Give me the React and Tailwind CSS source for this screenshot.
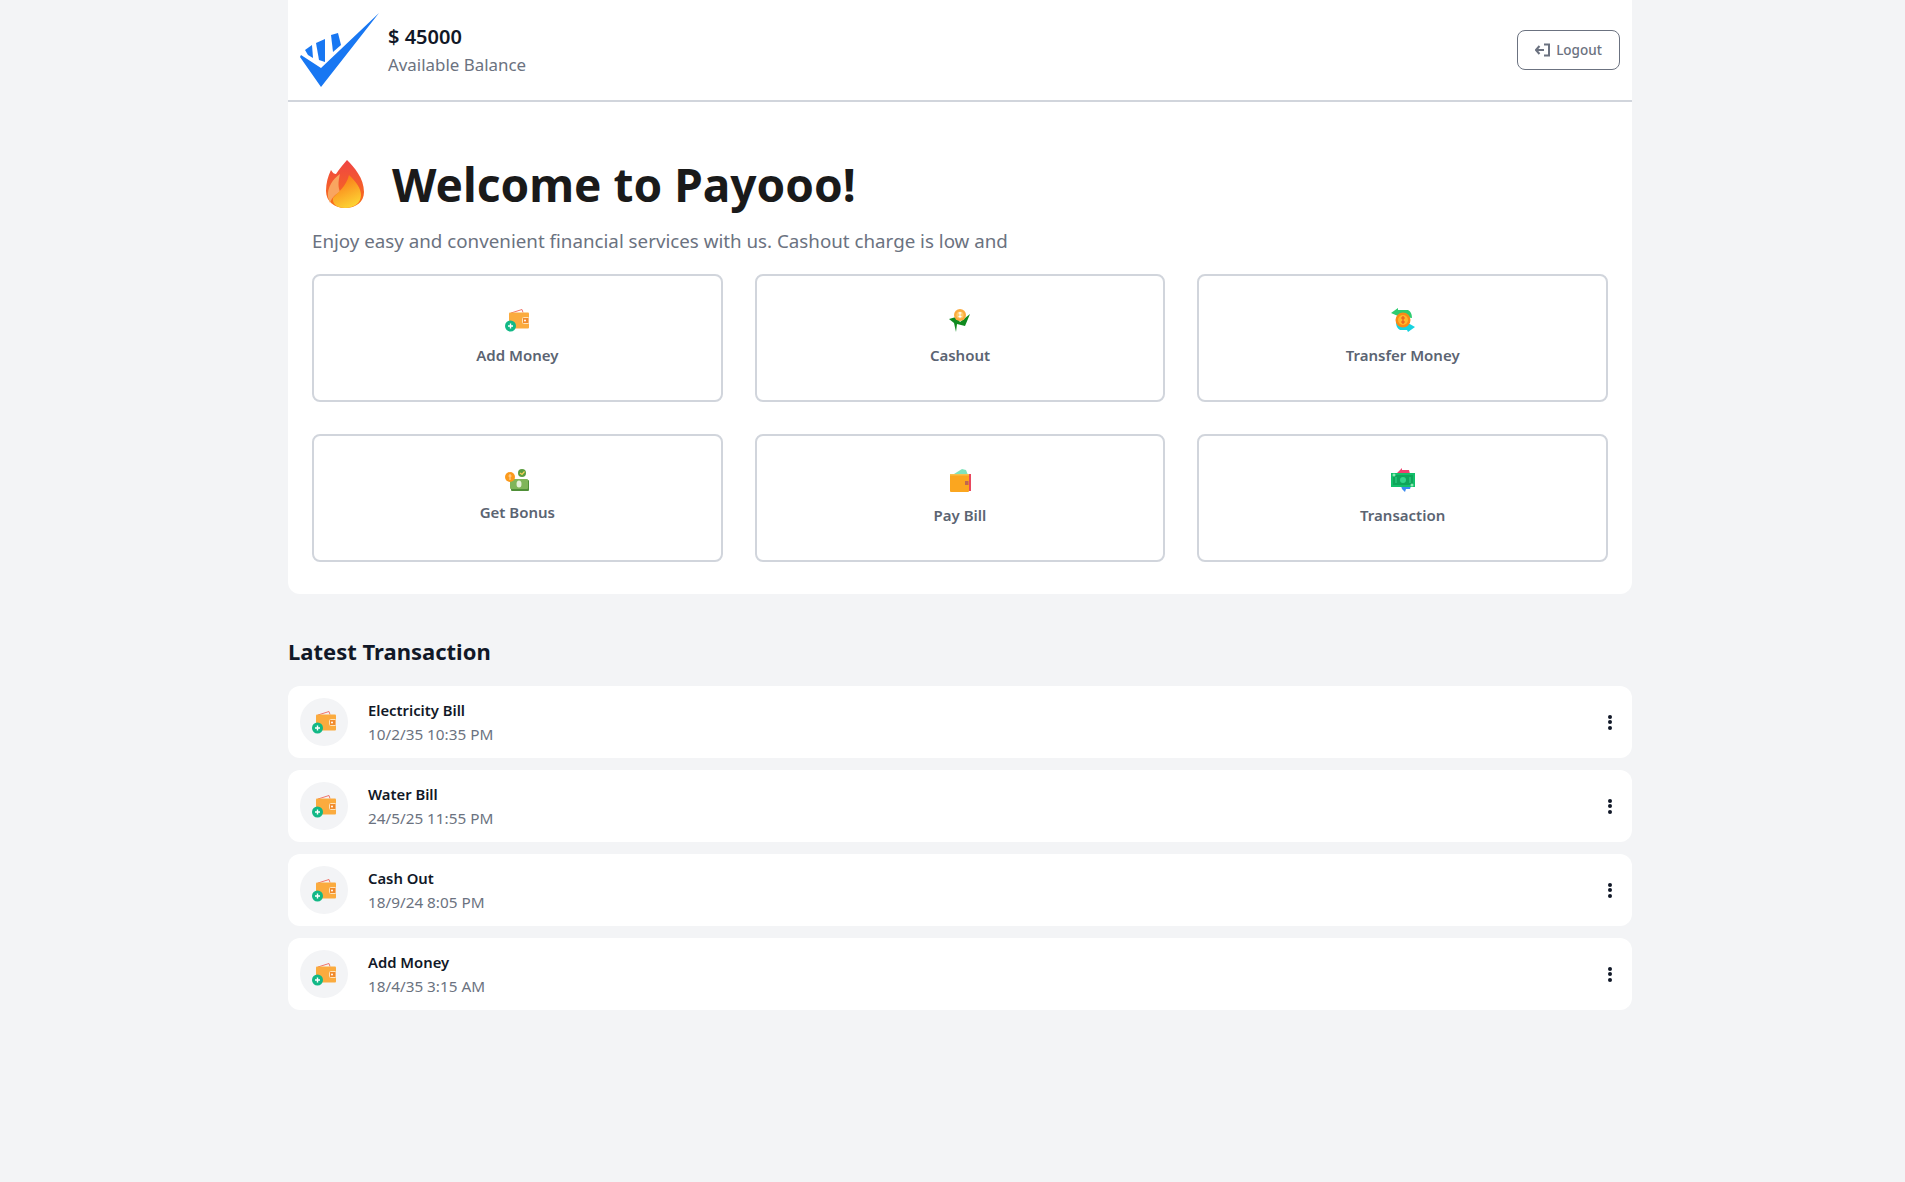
import React from 'react';

const font = { fontFamily: '"Noto Sans", sans-serif' };

function Logo() {
  return (
    <svg width="79" height="74" viewBox="12 13 79 74" className="shrink-0">
      <path d="M91 13 L33 87 L12 57 L13 55 L33 68 Z" fill="#1877f2" />
      <path d="M17 50 L24 45 L25 58 L20 55 Z" fill="#1877f2" />
      <path d="M28 43 L37 39 L37 62 L31 60 Z" fill="#1877f2" />
      <path d="M43 35 L50 33 L53 45 L45 52 Z" fill="#1877f2" />
    </svg>
  );
}

function Flame() {
  return (
    <svg width="42" height="50" viewBox="0 0 42 50">
      <defs>
        <linearGradient id="fl1" x1="0.5" y1="0" x2="0.5" y2="1">
          <stop offset="0" stopColor="#ef4444" />
          <stop offset="1" stopColor="#f97316" />
        </linearGradient>
        <linearGradient id="fl2" x1="0.3" y1="0" x2="0.7" y2="1">
          <stop offset="0" stopColor="#f97316" />
          <stop offset="1" stopColor="#fdd835" />
        </linearGradient>
      </defs>
      <path d="M23 1 C30 8 40 19 40 33 C40 43 32 49 21 49 C10 49 2 42 2 32 C2 24 4 17 7 11 C9 14 10 15 12 15 C15 10 19 6 23 1 Z" fill="url(#fl1)" />
      <path d="M4 38 C3 28 9 20 16 15 C14 23 14 28 16 33 C12 35 8 38 6 44 Z" fill="#f9a560" />
      <path d="M25 16 C32 23 37 29 37 36 C37 44 30 49 21 49 C13 49 8 45 9 39 C14 33 22 28 25 16 Z" fill="url(#fl2)" />
    </svg>
  );
}

function AddMoneyIcon({ size = 24 }) {
  return (
    <svg width={size} height={size} viewBox="0 0 24 24">
      <path d="M6 5 L17 1.5 L18 4.5" fill="none" stroke="#f0746a" strokeWidth="1" />
      <rect x="4" y="4.5" width="20" height="16" rx="1" fill="#fbab3e" />
      <rect x="17.5" y="9.5" width="6.5" height="6" rx="1" fill="#f08a2c" stroke="#ffe3b8" strokeWidth="1" />
      <circle cx="20" cy="12.5" r="1" fill="#fff" />
      <circle cx="5.5" cy="18" r="5.5" fill="#12b886" />
      <path d="M5.5 15.5 V20.5 M3 18 H8" stroke="#fff" strokeWidth="1.4" />
    </svg>
  );
}

function CashoutIcon() {
  return (
    <svg width="24" height="24" viewBox="0 0 24 24">
      <path d="M1 11 L8 9 L12 14 L22 6 L17 18 L9 16 L8 24 L6 15 Z" fill="#0f8a1f" />
      <circle cx="12" cy="7" r="6" fill="#fbab3e" />
      <circle cx="12" cy="7" r="3.6" fill="#ffc966" />
      <path d="M10.5 5 H13.5 M12 4 V10 M10.5 8.5 H13.5" stroke="#fff" strokeWidth="1" />
    </svg>
  );
}

function TransferIcon() {
  return (
    <svg width="24" height="24" viewBox="0 0 24 24">
      <path d="M0 5 L7 0 L7 2 L17 2 Q21 4 21 10 L7 8 Z" fill="#2ecc71" />
      <path d="M24 19 L17 24 L16 22 L9 22 Q5 20 5 14 L17 15 Z" fill="#16d3e0" />
      <circle cx="12" cy="12" r="7.5" fill="#f98a16" />
      <circle cx="12" cy="12" r="5" fill="#fdb72b" />
      <path d="M10 10 H14 M12 8 V16 M10 14 H14" stroke="#e8541e" strokeWidth="1.2" />
    </svg>
  );
}

function BonusIcon() {
  return (
    <svg width="24" height="24" viewBox="0 0 24 24">
      <circle cx="17" cy="5" r="4" fill="#5c9e3f" />
      <path d="M15 5 L17 6.5 L19.5 3.5" stroke="#fbd25a" strokeWidth="1.2" fill="none" />
      <rect x="6" y="12" width="18" height="11" rx="1" fill="#4f8f37" />
      <rect x="5" y="11" width="18" height="10" rx="1" fill="#7fb559" />
      <ellipse cx="14" cy="16" rx="2.5" ry="3.5" fill="#e4f0d8" />
      <circle cx="5" cy="9" r="5" fill="#fb9a1c" />
      <path d="M5 6 V12 M3.5 8 H6.5" stroke="#ffd9a8" strokeWidth="1" />
    </svg>
  );
}

function PayBillIcon() {
  return (
    <svg width="24" height="24" viewBox="0 0 24 24">
      <path d="M6 6 L14 1 L18 2 L20 7 Z" fill="#7fe3bc" />
      <rect x="19" y="6" width="4" height="17" fill="#e9475f" />
      <rect x="2" y="6" width="19" height="18" rx="1" fill="#fba61f" />
      <rect x="2" y="6" width="19" height="1.5" fill="#f6c14e" />
      <rect x="17" y="13" width="3.5" height="4" fill="#c0664f" />
    </svg>
  );
}

function TransactionIcon() {
  return (
    <svg width="24" height="24" viewBox="0 0 24 24">
      <path d="M6 5 L11 0 L11 2 L18 2 L19 6 Z" fill="#f0416f" />
      <path d="M10 18 L20 18 L19 21 L15 21 L14 24 L11 21 Z" fill="#3b8bf0" />
      <rect x="0" y="5" width="24" height="14" fill="#12c06a" />
      <rect x="2" y="7" width="20" height="10" fill="#0fa55a" />
      <circle cx="12" cy="12" r="3" fill="#35d68a" />
      <path d="M5 9 V15 M19 9 V15" stroke="#35d68a" strokeWidth="1" />
      <circle cx="3" cy="7" r="1.5" fill="#8ee8b5" />
      <circle cx="21" cy="17" r="1.5" fill="#8ee8b5" />
    </svg>
  );
}

function ActionCard({ icon, label, tight }) {
  return (
    <div className={`h-[128px] bg-white border-2 border-gray-300 rounded-lg flex flex-col items-center pt-[32px] ${tight ? 'gap-[9px]' : 'gap-[12px]'}`}>
      {icon}
      <p className="text-[15px] leading-[22px] font-semibold text-[#5b6472]">{label}</p>
    </div>
  );
}

function TxRow({ title, date }) {
  return (
    <div className="h-[72px] bg-white rounded-xl flex items-center justify-between pl-3 pr-[17px]">
      <div className="flex items-center gap-[20px]">
        <div className="w-12 h-12 rounded-full bg-gray-100 flex items-center justify-center">
          <AddMoneyIcon />
        </div>
        <div>
          <p className="text-[14.8px] leading-[24px] font-semibold text-[#111827]">{title}</p>
          <p className="text-[15.3px] leading-[24px] text-[#6b7280]">{date}</p>
        </div>
      </div>
      <div className="flex flex-col gap-[1.5px] pr-[3px]">
        <span className="w-1 h-1 bg-[#111827] rounded-full"></span>
        <span className="w-1 h-1 bg-[#111827] rounded-full"></span>
        <span className="w-1 h-1 bg-[#111827] rounded-full"></span>
      </div>
    </div>
  );
}

export default function App() {
  return (
    <div className="min-h-[1182px] bg-[#f3f4f6]" style={font}>
      <div className="w-[1344px] ml-[288px]">
        {/* header */}
        <div className="h-[102px] bg-white border-b-2 border-gray-300 flex items-center justify-between pl-[12px] pr-[12px]">
          <div className="flex items-center gap-[9px]">
            <Logo />
            <div className="pt-[2px]">
              <p className="text-[20px] leading-[28px] font-semibold text-[#111827]">$ 45000</p>
              <p className="text-[16.9px] leading-[28px] text-[#6b7280]">Available Balance</p>
            </div>
          </div>
          <button className="w-[103px] h-[40px] border border-[#6b7280] rounded-lg flex items-center justify-center gap-[5px] text-[13.5px] font-medium text-[#6b7280]">
            <svg width="16" height="14" viewBox="0 0 16 14" fill="none" stroke="#6b7280" strokeWidth="2">
              <path d="M9 7 H1 M4.5 3 L1 7 L4.5 11 M9 1.5 H14 V12.5 H9" />
            </svg>
            Logout
          </button>
        </div>

        {/* welcome */}
        <div className="bg-white rounded-b-xl px-6 pt-[52px] pb-8">
          <div className="flex items-center gap-[26px] pl-[12px]">
            <Flame />
            <h1 className="text-[46px] leading-[60px] font-bold text-[#1a1a1a]">Welcome to Payooo!</h1>
          </div>
          <p className="mt-[13px] text-[18.75px] leading-[28px] text-[#6b7280]">Enjoy easy and convenient financial services with us. Cashout charge is low and</p>
          <div className="grid grid-cols-3 gap-8 mt-[19px]">
            <ActionCard icon={<AddMoneyIcon />} label="Add Money" />
            <ActionCard icon={<CashoutIcon />} label="Cashout" />
            <ActionCard icon={<TransferIcon />} label="Transfer Money" />
            <ActionCard icon={<BonusIcon />} label="Get Bonus" tight />
            <ActionCard icon={<PayBillIcon />} label="Pay Bill" />
            <ActionCard icon={<TransactionIcon />} label="Transaction" />
          </div>
        </div>

        {/* transactions */}
        <h2 className="mt-[41px] text-[22px] leading-[32px] font-bold text-[#111827]">Latest Transaction</h2>
        <div className="mt-[19px] flex flex-col gap-3">
          <TxRow title="Electricity Bill" date="10/2/35 10:35 PM" />
          <TxRow title="Water Bill" date="24/5/25 11:55 PM" />
          <TxRow title="Cash Out" date="18/9/24 8:05 PM" />
          <TxRow title="Add Money" date="18/4/35 3:15 AM" />
        </div>
      </div>
    </div>
  );
}
